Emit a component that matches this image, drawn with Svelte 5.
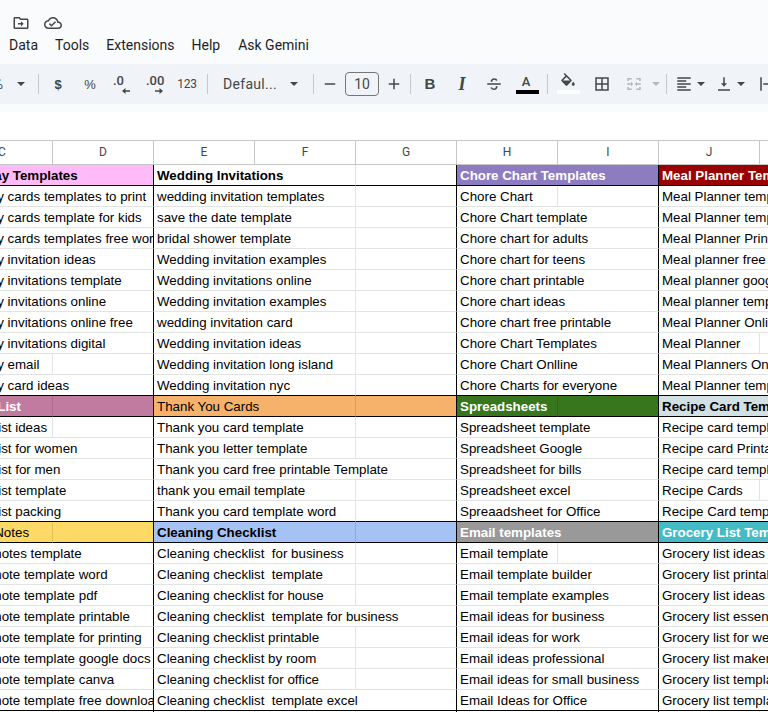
<script>
  const letters = ['C','D','E','F','G','H','I','J','K'];
  const hd = (t, bg, fg = 'dark', bold = true, s = 0) => ({ t, bg, fg, bold, s, head: true });
  // a string is a cell that overflows over all of its group's columns; [text, span] sets the span by hand
  const blocks = [
    [
      [hd('Birthday Templates','pink'), hd('Wedding Invitations','none','dark',true,2), hd('Chore Chart Templates','purple','light'), hd('Meal Planner Templates','red','light')],
      ['Birthday cards templates to print',['wedding invitation templates',2],['Chore Chart',1],'Meal Planner template'],
      ['Birthday cards template for kids',['save the date template',2],'Chore Chart template','Meal Planner template'],
      ['Birthday cards templates free word',['bridal shower template',2],'Chore chart for adults','Meal Planner Printable'],
      ['Birthday invitation ideas',['Wedding invitation examples',2],'Chore chart for teens','Meal planner free template'],
      ['Birthday invitations template',['Wedding invitations online',2],'Chore chart printable','Meal planner google'],
      ['Birthday invitations online',['Wedding invitation examples',2],'Chore chart ideas','Meal planner template'],
      ['Birthday invitations online free',['wedding invitation card',2],'Chore chart free printable','Meal Planner Online'],
      ['Birthday invitations digital',['Wedding invitation ideas',2],'Chore Chart Templates',['Meal Planner',1]],
      [['Birthday email',1],['Wedding invitation long island',2],'Chore Chart Onlline','Meal Planners Online'],
      ['Birthday card ideas',['Wedding invitation nyc',2],'Chore Charts for everyone','Meal Planner template']
    ],
    [
      [hd('Travel List','mauve','light',true,1), hd('Thank You Cards','orange','dark',false,2), hd('Spreadsheets','green','light',true,1), hd('Recipe Card Templates','ice')],
      [['Travel list ideas',1],['Thank you card template',2],'Spreadsheet template','Recipe card template'],
      ['Travel list for women',['Thank you letter template',2],'Spreadsheet Google','Recipe card Printable'],
      ['Travel list for men',['Thank you card free printable Template',3],'Spreadsheet for bills','Recipe card template'],
      ['Travel list template',['thank you email template',2],'Spreadsheet excel',['Recipe Cards',1]],
      ['Travel list packing',['Thank you card template word',2],'Spreaadsheet for Office','Recipe Card template']
    ],
    [
      [hd('Sticky Notes','yellow','dark',false,1), hd('Cleaning Checklist','blue','dark',true,2), hd('Email templates','gray','light'), hd('Grocery List Templates','teal','light')],
      ['Sticky notes template',['Cleaning checklist  for business',2],['Email template',1],'Grocery list ideas'],
      ['Sticky note template word',['Cleaning checklist  template',2],'Email template builder','Grocery list printable'],
      ['Sticky note template pdf',['Cleaning checklist for house',2],'Email template examples','Grocery list ideas'],
      ['Sticky note template printable',['Cleaning checklist  template for business',3],'Email ideas for business','Grocery list essentials'],
      ['Sticky note template for printing',['Cleaning checklist printable',2],'Email ideas for work','Grocery list for week'],
      ['Sticky note template google docs',['Cleaning checklist by room',2],'Email ideas professional','Grocery list maker'],
      ['Sticky note template canva',['Cleaning checklist for office',2],'Email ideas for small business','Grocery list template'],
      ['Sticky note template free download',['Cleaning checklist  template excel',3],'Email Ideas for Office','Grocery list template']
    ]
  ];
  const sizes = [2, 3, 2, 2];
  function rowCells(row) {
    const out = [];
    row.forEach((raw, g) => {
      const n = sizes[g];
      const c = typeof raw === 'string' ? { t: raw } : Array.isArray(raw) ? { t: raw[0], s: raw[1] } : raw;
      const span = c.s || n;
      out.push({ ...c, span, end: span === n && g < 3 });
      for (let i = span; i < n; i++) out.push({ t: '', span: 1, bg: c.bg, end: i === n - 1 && g < 3, head: c.head });
    });
    return out;
  }
  const rows = blocks.flatMap((b) =>
    b.map((r, i) => ({ cells: rowCells(r), black: i === 0 || i === b.length - 1 }))
  );
  const blank = Array.from({ length: 9 }, (_, i) => i);
  const endCols = [1, 4, 6];
</script>

<div class="page">
  <div class="chrome">
    <div class="quick">
      <svg class="ico" viewBox="0 0 24 24"><path d="M20 6h-8l-2-2H4c-1.1 0-2 .9-2 2v12c0 1.1.9 2 2 2h16c1.1 0 2-.9 2-2V8c0-1.1-.9-2-2-2zm0 12H4V6h5.17l2 2H20v10zm-8-4H8v-2h4V9.5l3.5 3.5-3.5 3.5V14z"/></svg>
      <svg class="ico" viewBox="0 0 24 24"><path d="M19.35 10.04C18.67 6.59 15.64 4 12 4 9.11 4 6.6 5.64 5.35 8.04 2.34 8.36 0 10.91 0 14c0 3.31 2.69 6 6 6h13c2.76 0 5-2.24 5-5 0-2.64-2.05-4.78-4.65-4.96zM19 18H6c-2.21 0-4-1.79-4-4 0-2.05 1.53-3.76 3.56-3.97l1.07-.11.5-.95C8.08 7.14 9.94 6 12 6c2.62 0 4.88 1.86 5.39 4.43l.3 1.5 1.53.11c1.56.1 2.78 1.41 2.78 2.96 0 1.65-1.35 3-3 3zm-9-3.82l-2.09-2.09L6.5 13.5 10 17l6.01-6.01-1.41-1.41z"/></svg>
    </div>
    <nav class="menu">
      <span class="m-data">Data</span>
      <span class="m-tools">Tools</span>
      <span class="m-ext">Extensions</span>
      <span class="m-help">Help</span>
      <span>Ask Gemini</span>
    </nav>
    <div class="toolbar">
      <span class="zoom">%</span>
      <i class="caret c-zoom"></i>
      <i class="sep s-zoom"></i>
      <span class="btn sym">$</span>
      <span class="btn sym">%</span>
      <span class="btn dec">
        <span class="d0">.0</span>
        <svg class="arrow a-l" viewBox="0 0 8 6"><path d="M8 2.300H3.500V0L0 3l3.500 3V3.700H8z"/></svg>
      </span>
      <span class="btn dec">
        <span class="d00">.00</span>
        <svg class="arrow a-r" viewBox="0 0 8 6"><path d="M0 2.300h4.500V0L8 3 4.500 6V3.700H0z"/></svg>
      </span>
      <span class="btn num">123</span>
      <i class="sep s-num"></i>
      <span class="font">Defaul...</span>
      <i class="caret c-font"></i>
      <i class="sep s-font"></i>
      <span class="pm"><svg class="ico" viewBox="0 0 24 24"><path d="M5 11h14v2H5z"/></svg></span>
      <span class="size">10</span>
      <span class="pm"><svg class="ico" viewBox="0 0 24 24"><path d="M19 13h-6v6h-2v-6H5v-2h6V5h2v6h6z"/></svg></span>
      <i class="sep s-plus"></i>
      <span class="btn glyph-b">B</span>
      <span class="btn glyph-i">I</span>
      <span class="btn"><svg class="ico" viewBox="0 0 24 24"><path d="M3 11h18v2H3z"/><path d="M7.500 9c0-3 2-4.800 4.700-4.800 2.300 0 3.900 1 4.500 3l-2 .6C14.300 6.900 13.500 6.200 12.200 6.200 10.700 6.200 9.800 7.300 9.800 9zM16.800 15c0 3-1.900 5-4.800 5-2.400 0-4-1.200-4.600-3.200l2-.6c.4 1.300 1.300 1.900 2.600 1.900 1.600 0 2.500-1.200 2.500-3.100z"/></svg></span>
      <span class="btn colour"><span class="a">A</span><i class="bar black"></i></span>
      <i class="sep s-a"></i>
      <span class="btn fill">
        <svg class="ico" viewBox="0 0 24 24"><path d="M16.560 8.940L7.620 0 6.210 1.410l2.380 2.380-5.150 5.150c-.59.59-.59 1.540 0 2.120l5.500 5.500c.29.29.68.44 1.060.44s.77-.15 1.060-.44l5.500-5.500c.59-.58.59-1.530 0-2.120zM5.210 10L10 5.210 14.790 10H5.210zM19 11.500s-2 2.170-2 3.500c0 1.100.9 2 2 2s2-.9 2-2c0-1.330-2-3.500-2-3.500z"/></svg>
        <i class="bar white"></i>
      </span>
      <span class="btn borders"><svg class="ico" viewBox="0 0 24 24"><path d="M3 3v18h18V3H3zm8 16H5v-6h6v6zm0-8H5V5h6v6zm8 8h-6v-6h6v6zm0-8h-6V5h6v6z"/></svg></span>
      <span class="btn off"><svg class="ico" viewBox="0 0 24 24"><path d="M3 4h6v2H5v2H3zM21 4h-6v2h4v2h2zM3 20h6v-2H5v-2H3zM21 20h-6v-2h4v-2h2zM3 11h5V9l3 3-3 3v-2H3zM21 11h-5V9l-3 3 3 3v-2h5z"/></svg></span>
      <i class="caret off c-merge"></i>
      <i class="sep s-merge"></i>
      <span class="tool"><svg class="ico" viewBox="0 0 24 24"><path d="M3 3h18v2H3zM3 7h12v2H3zM3 11h18v2H3zM3 15h12v2H3zM3 19h18v2H3z"/></svg></span>
      <i class="caret c-align"></i>
      <span class="tool t-v"><svg class="ico" viewBox="0 0 24 24"><path d="M16 11h-3V3h-2v8H8l4 4.500zM4 19h16v2H4z"/></svg></span>
      <i class="caret c-valign"></i>
      <span class="tool t-wrap"><svg class="ico" viewBox="0 0 24 24"><path d="M3 3h2v18H3zM19 3h2v4h-2zM19 10h2v4h-2zM19 17h2v4h-2zM7 11h8V8l4 4-4 4v-3H7z"/></svg></span>
    </div>
    <div class="strip"></div>
  </div>

  <div class="gap"></div>

  <div class="sheet">
    <div class="grid">
      {#each letters as l}
        <div class="col">{l}</div>
      {/each}
      {#each rows as r}
        {#each r.cells as c}
          <div
            class="cell span{c.span} {c.bg || ''} {c.fg || ''}"
            class:black={r.black}
            class:end={c.end}
            class:head={c.head}
            class:strong={c.bold}
          >{c.t}</div>
        {/each}
      {/each}
      {#each blank as i}
        <div class="cell" class:end={endCols.includes(i)}></div>
      {/each}
    </div>
  </div>
</div>

<style>
  :global(body) {
    margin: 0;
    background: #fff;
  }
  .page {
    width: 768px;
    height: 712px;
    overflow: hidden;
    font-family: Roboto, "Liberation Sans", sans-serif;
    color: #444746;
  }
  .chrome {
    background: #f9fbfd;
  }
  .quick {
    display: flex;
    gap: 14px;
    height: 33px;
    padding: 14px 0 0 12px;
    box-sizing: border-box;
  }
  .ico {
    width: 18px;
    height: 18px;
    flex: none;
    fill: currentColor;
    display: block;
  }
  .menu {
    display: flex;
    height: 31px;
    padding: 0 0 0 9px;
    align-items: flex-start;
    font-size: 14px;
    line-height: 24px;
    color: #1f1f1f;
  }
  .m-data { margin-right: 17px; }
  .m-tools { margin-right: 17px; }
  .m-ext { margin-right: 17px; }
  .m-help { margin-right: 18px; }
  .toolbar {
    display: flex;
    align-items: center;
    height: 40px;
    background: #f0f4f9;
    white-space: nowrap;
    overflow: hidden;
  }
  .strip {
    height: 8px;
  }
  .zoom {
    width: 3px;
    flex: none;
    overflow: hidden;
    direction: rtl;
    font-size: 14px;
  }
  .caret {
    flex: none;
    width: 0;
    height: 0;
    border-left: 4px solid transparent;
    border-right: 4px solid transparent;
    border-top: 4px solid #444746;
  }
  .caret.off {
    border-top-color: #b4b7b9;
  }
  .c-zoom { margin-left: 14px; }
  .sep {
    flex: none;
    width: 1px;
    height: 20px;
    background: #c7c7c7;
  }
  .s-zoom { margin: 0 3px 0 13px; }
  .btn {
    flex: none;
    width: 32px;
    height: 24px;
    position: relative;
    display: flex;
    align-items: center;
    justify-content: center;
  }
  .sym {
    font-family: "Liberation Sans", sans-serif;
    font-size: 13px;
    font-weight: 700;
  }
  .sym + .sym {
    font-weight: 400;
    font-size: 13px;
  }
  .dec {
    font-size: 13px;
    font-weight: 500;
    line-height: 18px;
  }
  .d0,
  .d00 {
    position: absolute;
    top: 0;
  }
  .d0 { left: 7px; }
  .d00 { left: 8px; }
  .arrow {
    position: absolute;
    width: 8px;
    height: 6px;
    fill: currentColor;
    top: 16px;
  }
  .a-l { left: 16px; }
  .a-r { left: 17px; }
  .num {
    font-size: 12px;
    padding-left: 2px;
    box-sizing: border-box;
    letter-spacing: -0.2px;
  }
  .s-num { margin: 0 15px 0 5px; }
  .font {
    flex: none;
    width: 67px;
    font-size: 14px;
    letter-spacing: 0.3px;
  }
  .s-font { margin: 0 1px 0 15px; }
  .pm {
    flex: none;
    width: 30px;
    display: flex;
    justify-content: center;
  }
  .size {
    flex: none;
    width: 32px;
    height: 22px;
    border: 1px solid #747775;
    border-radius: 4px;
    text-align: center;
    font-size: 14px;
    line-height: 22px;
  }
  .s-plus { margin: 0 3px 0 1px; }
  .glyph-b {
    font-family: "Liberation Sans", sans-serif;
    font-weight: 700;
    font-size: 15px;
    padding-bottom: 2px;
    box-sizing: border-box;
  }
  .glyph-i {
    font-family: "Liberation Serif", serif;
    font-style: italic;
    font-weight: 700;
    font-size: 18px;
  }
  .colour .a {
    font-size: 13px;
    font-weight: 500;
    position: absolute;
    top: 2px;
    line-height: 16px;
  }
  .bar {
    position: absolute;
    left: 5px;
    top: 18px;
    width: 23px;
    height: 4px;
  }
  .colour .bar { left: 6px; }
  .bar.black { background: #000; }
  .bar.white { background: #fff; }
  .s-a { margin: 0 4px 0 5px; }
  .fill .ico {
    position: absolute;
    top: 1px;
    left: 7px;
  }
  .borders { margin-left: 2px; }
  .off {
    color: #b4b7b9;
  }
  .c-merge { margin-left: 2px; }
  .s-merge { margin: 0 3px 0 6px; }
  .tool {
    flex: none;
    width: 28px;
    display: flex;
    justify-content: center;
  }
  .c-align { margin-left: -1px; }
  .t-v { margin-left: 5px; }
  .c-valign { margin-left: -1px; }
  .t-wrap { margin-left: 8px; }
  .gap {
    height: 28px;
    background: #fff;
  }
  .sheet {
    width: 768px;
    overflow: hidden;
    border-top: 1px solid #c7c7c7;
  }
  .grid {
    display: grid;
    grid-template-columns: repeat(9, 101px);
    grid-template-rows: 24px;
    grid-auto-rows: 21px;
    margin-left: -48px;
    width: 909px;
    font-family: "Liberation Sans", Arial, sans-serif;
    font-size: 13.33px;
    color: #000;
  }
  .col {
    height: 24px;
    box-sizing: border-box;
    border-right: 1px solid #c7c7c7;
    border-bottom: 1px solid #c7c7c7;
    text-align: center;
    font-family: Roboto, sans-serif;
    font-size: 12px;
    line-height: 23px;
    color: #444746;
    background: #fff;
  }
  .cell {
    box-sizing: border-box;
    height: 21px;
    padding: 0 3px;
    overflow: hidden;
    white-space: pre;
    line-height: 22px;
    border-right: 1px solid #e2e3e3;
    border-bottom: 1px solid #e2e3e3;
  }
  .cell.head {
    border-color: rgba(0, 0, 0, 0.12);
  }
  .cell.black { border-bottom-color: #000; }
  .cell.end,
  .cell.head.end { border-right-color: #000; }
  .strong { font-weight: 700; }
  .span1 { grid-column: span 1; }
  .span2 { grid-column: span 2; }
  .span3 { grid-column: span 3; }
  .light { color: #fff; }
  .pink { background: #ffbbf8; }
  .purple { background: #8e7cc3; }
  .red { background: #990000; }
  .mauve { background: #c27ba0; }
  .orange { background: #f6b26b; }
  .green { background: #38761d; }
  .ice { background: #d0e0e3; }
  .yellow { background: #ffd966; }
  .blue { background: #a4c2f4; }
  .gray { background: #999999; }
  .teal { background: #45bbc5; }
</style>
